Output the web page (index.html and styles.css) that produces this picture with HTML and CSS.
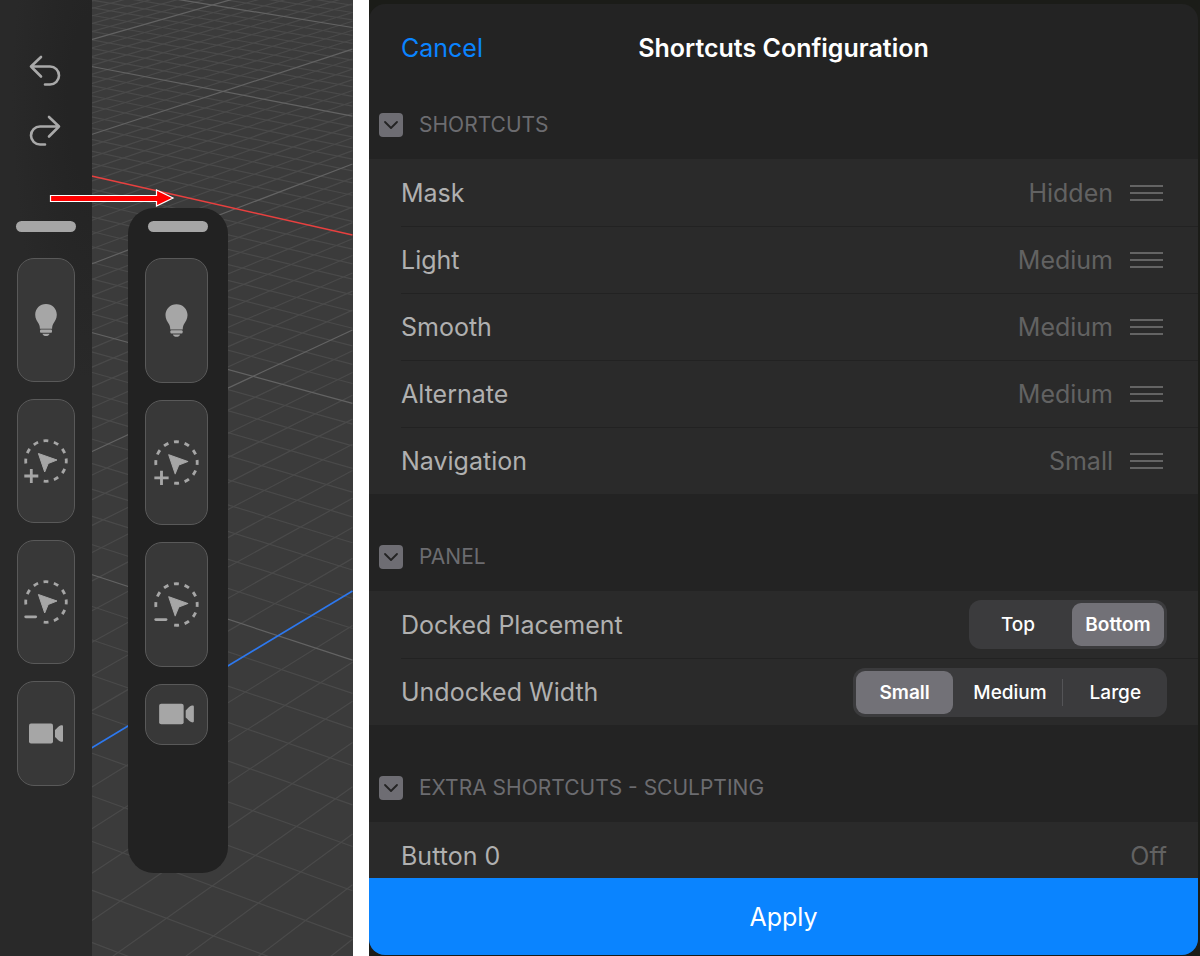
FILE: index.html
```html
<!DOCTYPE html>
<html lang="en">
<head>
<meta charset="utf-8">
<title>Shortcuts Configuration</title>
<link rel="stylesheet" href="styles.css">
</head>
<body>
<svg class="symbols" aria-hidden="true">
  <symbol id="bulb" viewBox="-24 -24 48 48">
    <path d="M0-16c-6.200 0-10.800 4.700-10.800 10.700 0 4.200 1.900 6.200 3.500 9 .9 1.600 1.100 3 1.200 5H6.100c.1-2 .3-3.400 1.200-5 1.600-2.800 3.500-4.800 3.500-9C10.800-11.300 6.200-16 0-16z"/>
    <rect x="-6" y="9.600" width="12" height="3.200" rx="1"/>
    <path d="M-3.600 13.700h7.200c-.6 1.600-1.800 2.300-3.600 2.300s-3-.7-3.600-2.300z"/>
  </symbol>
  <symbol id="lasso" viewBox="-24 -24 48 48">
    <circle r="20.300" fill="none" stroke="currentColor" stroke-width="2.800" pathLength="12" transform="rotate(173)" stroke-dasharray=".46 .54 .46 .54 .46 .54 .46 .54 .46 .54 .46 .54 .46 .54 .46 .54 .46 .54 .46 2.540"/>
    <path stroke="currentColor" stroke-linejoin="round" d="M-7.600-7.500 11-1 2.200 2.500-1.300 11z"/>
  </symbol>
  <symbol id="lasso-add" viewBox="-24 -24 48 48">
    <use href="#lasso" x="-24" y="-24" width="48" height="48"/>
    <path fill="none" stroke="currentColor" stroke-width="2.800" d="M-21.700 15h14M-14.700 8v14"/>
  </symbol>
  <symbol id="lasso-remove" viewBox="-24 -24 48 48">
    <use href="#lasso" x="-24" y="-24" width="48" height="48"/>
    <path fill="none" stroke="currentColor" stroke-width="2.800" stroke-linecap="round" d="M-20.300 14.800h10"/>
  </symbol>
  <symbol id="camera" viewBox="-24 -24 48 48">
    <rect x="-17" y="-10.500" width="24" height="20" rx="2"/>
    <path d="M9-4c2-1.500 3.500-4 6-4.700 1.300-.4 2 0 2 1V6.700c0 1-.7 1.400-2 1C12.500 7 11 4.500 9 3z"/>
  </symbol>
</svg>

<main class="app">
  <section class="scene" aria-label="Viewport">
    <svg class="grid" viewBox="0 0 353 956" preserveAspectRatio="xMinYMin slice" aria-hidden="true"></svg>

    <nav class="dock" aria-label="Docked shortcuts">
      <button class="history" aria-label="Undo"><svg width="36" height="34" viewBox="0 0 36 34"><path d="M13 2 3 11.500 13 21.500M3 11.500h19a9 9 0 0 1 0 18h-5"/></svg></button>
      <button class="history" aria-label="Redo"><svg width="36" height="34" viewBox="0 0 36 34"><path d="m21 2 10 9.500-10 10M31 11.500H12a9 9 0 0 0 0 18h5"/></svg></button>
      <div class="grip"></div>
      <div class="tools">
        <button class="tool" aria-label="Light"><svg><use href="#bulb"/></svg></button>
        <button class="tool" aria-label="Mask"><svg><use href="#lasso-add"/></svg></button>
        <button class="tool" aria-label="Unmask"><svg><use href="#lasso-remove"/></svg></button>
        <button class="tool tool-short" aria-label="Navigation"><svg><use href="#camera"/></svg></button>
      </div>
    </nav>

    <nav class="floating" aria-label="Undocked shortcuts">
      <div class="grip"></div>
      <div class="tools">
        <button class="tool" aria-label="Light"><svg><use href="#bulb"/></svg></button>
        <button class="tool" aria-label="Mask"><svg><use href="#lasso-add"/></svg></button>
        <button class="tool" aria-label="Unmask"><svg><use href="#lasso-remove"/></svg></button>
        <button class="tool tool-short" aria-label="Navigation"><svg><use href="#camera"/></svg></button>
      </div>
    </nav>

    <svg class="arrow" width="126" height="20" viewBox="0 0 126 20" aria-hidden="true"><path d="M1.500 7.500h106V2l16.500 8-16.500 8v-4.500H1.500z"/></svg>
  </section>

  <section class="backdrop">
    <form class="sheet">
      <header class="sheet-head">
        <button type="button" class="cancel">Cancel</button>
        <h1 class="title">Shortcuts Configuration</h1>
      </header>

      <div class="sheet-body">
        <h2 class="group group-first"><button type="button" class="fold" aria-label="Collapse shortcuts"><svg width="24" height="24"><path d="m6 9 6 6 6-6"/></svg></button>SHORTCUTS</h2>
        <ul class="rows">
          <li class="row"><span>Mask</span><span class="value">Hidden</span><svg class="drag" width="37" height="20"><path d="M0 3h33M0 10h33M0 17h33"/></svg></li>
          <li class="row"><span>Light</span><span class="value">Medium</span><svg class="drag" width="37" height="20"><path d="M0 3h33M0 10h33M0 17h33"/></svg></li>
          <li class="row"><span>Smooth</span><span class="value">Medium</span><svg class="drag" width="37" height="20"><path d="M0 3h33M0 10h33M0 17h33"/></svg></li>
          <li class="row"><span>Alternate</span><span class="value">Medium</span><svg class="drag" width="37" height="20"><path d="M0 3h33M0 10h33M0 17h33"/></svg></li>
          <li class="row"><span>Navigation</span><span class="value">Small</span><svg class="drag" width="37" height="20"><path d="M0 3h33M0 10h33M0 17h33"/></svg></li>
        </ul>

        <h2 class="group"><button type="button" class="fold" aria-label="Collapse panel"><svg width="24" height="24"><path d="m6 9 6 6 6-6"/></svg></button>PANEL</h2>
        <ul class="rows">
          <li class="row"><span id="placement">Docked Placement</span>
            <div class="segments" role="radiogroup" aria-labelledby="placement">
              <label class="segment"><input type="radio" name="placement">Top</label>
              <label class="segment"><input type="radio" name="placement" checked>Bottom</label>
            </div>
          </li>
          <li class="row"><span id="width">Undocked Width</span>
            <div class="segments" role="radiogroup" aria-labelledby="width">
              <label class="segment"><input type="radio" name="width" checked>Small</label>
              <label class="segment"><input type="radio" name="width">Medium</label>
              <label class="segment"><input type="radio" name="width">Large</label>
            </div>
          </li>
        </ul>

        <h2 class="group"><button type="button" class="fold" aria-label="Collapse extra shortcuts"><svg width="24" height="24"><path d="m6 9 6 6 6-6"/></svg></button>EXTRA SHORTCUTS - SCULPTING</h2>
        <ul class="rows">
          <li class="row"><span>Button 0</span><span class="value">Off</span></li>
        </ul>
      </div>

      <button type="button" class="apply">Apply</button>
    </form>
  </section>
</main>
<script src="grid.js"></script>
</body>
</html>
```
FILE: styles.css
```css
* { box-sizing: border-box; }

body {
  margin: 0;
  background: #fff;
  font-family: Inter, "Liberation Sans", sans-serif;
}

button {
  margin: 0;
  padding: 0;
  border: 0;
  background: none;
  color: inherit;
  font: inherit;
}

.symbols { position: absolute; width: 0; height: 0; }

.app {
  display: grid;
  grid-template-columns: 353fr 831fr;
  grid-template-rows: minmax(0, 1fr);
  gap: 16px;
  height: 100vh;
}

/* Viewport */
.scene {
  position: relative;
  display: flex;
  overflow: hidden;
  background: #3b3b3b;
}

.grid { position: absolute; inset: 0; width: 100%; height: 100%; }
.grid line { stroke: #4a4a4a; stroke-width: 1.2; }
.grid .major { stroke: #636363; }
.grid .axis-x { stroke: #e8403f; stroke-width: 1.4; }
.grid .axis-z { stroke: #2d78ee; stroke-width: 1.6; }

.dock {
  position: relative;
  display: flex;
  flex-direction: column;
  align-items: center;
  width: 92px;
  padding-top: 42px;
  background: radial-gradient(ellipse 80px 280px at 100% 100px, #242424 30%, #292929) #292929;
}

.history { height: 60px; color: #a9a9a9; }
.history svg { display: block; fill: none; stroke: currentColor; stroke-width: 2.6; stroke-linecap: round; stroke-linejoin: round; }

.grip { width: 60px; height: 11px; border-radius: 6px; background: #a6a6a6; }
.dock .grip { margin-top: 59px; }

.tools { display: flex; flex-direction: column; gap: 17px; margin-top: 26px; }

.tool {
  display: flex;
  align-items: center;
  justify-content: center;
  width: 58px;
  height: 124px;
  border: 1px solid #595959;
  border-radius: 17px;
  background: #383838;
  color: #a6a6a6;
}
.tool svg { width: 48px; height: 48px; fill: currentColor; }
.dock .tool-short { height: 105px; }

.floating {
  position: absolute;
  left: 128px;
  top: 208px;
  display: flex;
  flex-direction: column;
  align-items: center;
  width: 100px;
  padding: 13px 0 128px;
  border-radius: 26px;
  background: #222;
}
.floating .tools { margin-right: 3px; }
.floating .tool { width: 63px; height: 125px; }
.floating .tool svg { width: 49px; height: 49px; }
.floating .tool-short { height: 61px; }

.arrow { position: absolute; left: 49px; top: 188px; fill: #f00; stroke: #fff; stroke-width: 1.2; }

/* Settings sheet */
.backdrop { display: flex; padding: 4px 2px 1px 0; background: #1b1c18; }

.sheet {
  display: flex;
  flex: 1;
  flex-direction: column;
  overflow: hidden;
  border-radius: 16px;
  background: #232323;
}

.sheet-head {
  display: grid;
  grid-template-columns: 1fr auto 1fr;
  align-items: center;
  height: 87px;
  padding: 0 32px;
  font-size: 25px;
  flex: none;
}
.cancel { justify-self: start; color: #0a84ff; }
.title { margin: 0; color: #fff; font-size: 25px; font-weight: 600; }

.sheet-body { flex: 1; min-height: 0; overflow: hidden; }

.group {
  display: flex;
  align-items: flex-end;
  gap: 16px;
  height: 97px;
  margin: 0;
  padding: 0 10px 22px;
  color: #6c6c70;
  font-size: 21px;
  line-height: 24px;
  font-weight: 400;
}
.group-first { height: 68px; }

.fold { height: 24px; border-radius: 4px; background: #6e6d73; }
.fold svg { display: block; fill: none; stroke: #232323; stroke-width: 1.8; stroke-linecap: round; stroke-linejoin: round; }

.rows {
  margin: 0;
  padding: 0 0 0 32px;
  background: #2a2a2a;
  list-style: none;
}

.row {
  display: flex;
  align-items: center;
  justify-content: space-between;
  height: 67px;
  padding-right: 31px;
  color: #b0b0b0;
  font-size: 25px;
}
.row + .row { border-top: 1px solid #222; }

.value { margin-left: auto; color: #626262; }
.drag { margin-left: 17px; fill: none; stroke: #646464; stroke-width: 2; }

.segments {
  display: grid;
  grid-auto-flow: column;
  grid-auto-columns: 1fr;
  gap: 8px;
  padding: 3px;
  border-radius: 12px;
  background: #3b3b3d;
}

.segment {
  position: relative;
  min-width: 92px;
  padding: 0 12px;
  border-radius: 9px;
  color: #fff;
  font-size: 19px;
  font-weight: 500;
  line-height: 43px;
  text-align: center;
}
.segment input { position: absolute; margin: 0; opacity: 0; }
.segment:has(:checked) { background: #727177; font-weight: 600; }
.segment:not(:has(:checked)) + .segment:not(:has(:checked))::before {
  content: "";
  position: absolute;
  left: -5px;
  top: 8px;
  bottom: 8px;
  width: 1px;
  background: #545457;
}

.apply { flex: none; height: 77px; background: #0a84ff; color: #fff; font-size: 25px; }
```
FILE: grid.js
```js
// Floor grid in perspective. Each family of parallel lines is described by
// where it meets the left and right edge: y(n) = (a * n + b) / (c * n + 1).
const svg = document.querySelector(".grid");
const LEFT = 91.5;
const RIGHT = 352.5;

const families = [
  { left: [97.75, 176, -0.1767], right: [99, 235, -0.172], from: -24, to: 30, axis: "axis-x" },
  { left: [165.6, 748, -0.2893], right: [166.6, 591, -0.286], from: -46, to: 9, axis: "axis-z" },
];

const edge = ([a, b, c], n) => (a * n + b) / (c * n + 1);

function draw(family, step, className) {
  const line = document.createElementNS("http://www.w3.org/2000/svg", "line");
  const n = step / 10;
  line.setAttribute("x1", LEFT);
  line.setAttribute("y1", edge(family.left, n));
  line.setAttribute("x2", RIGHT);
  line.setAttribute("y2", edge(family.right, n));
  if (className) line.setAttribute("class", className);
  svg.append(line);
}

for (const family of families) {
  for (let s = family.from; s <= family.to; s++) if (s % 10) draw(family, s);
}
for (const family of families) {
  for (let s = family.from; s <= family.to; s++) if (s && s % 10 === 0) draw(family, s, "major");
}
for (const family of families) draw(family, 0, family.axis);
```
